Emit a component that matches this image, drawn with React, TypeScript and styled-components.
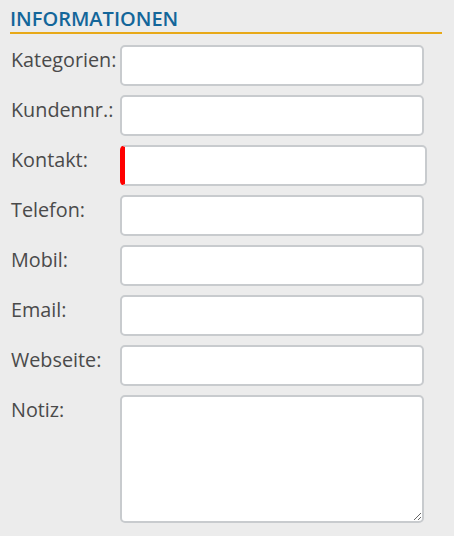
import React from 'react';
import styled, { createGlobalStyle } from 'styled-components';

const GlobalStyle = createGlobalStyle`
  html, body {
    margin: 0;
    padding: 0;
    background: #ececec;
  }
  body {
    font-family: 'Open Sans', 'Noto Sans', sans-serif;
  }
`;

const Panel = styled.section`
  padding: 7px 12px 0 10px;
`;

const Heading = styled.h2`
  margin: 0;
  font-size: 20px;
  line-height: 24px;
  font-weight: 600;
  color: #13669a;
  padding-bottom: 1px;
  border-bottom: 2px solid #e8a918;
`;

const Form = styled.div`
  margin-top: 11px;
  display: grid;
  grid-template-columns: 110px auto;
  row-gap: 9px;
  justify-items: start;
`;

const Label = styled.label`
  padding: 3px 0 0 1px;
  font-size: 19.8px;
  line-height: 24px;
  color: #4a4a4a;
  white-space: nowrap;
`;

const Input = styled.input<{ $required?: boolean }>`
  box-sizing: border-box;
  width: ${(p) => (p.$required ? 307 : 304)}px;
  height: 41px;
  margin: 0;
  padding: 4px 8px;
  background: #fff;
  border: 2px solid #c8cbce;
  border-left: ${(p) => (p.$required ? '5px solid #ff0000' : '2px solid #c8cbce')};
  border-radius: 5px;
  font-family: inherit;
  font-size: 16px;
  outline: none;
`;

const TextArea = styled.textarea`
  box-sizing: border-box;
  width: 304px;
  height: 128px;
  margin: 0;
  padding: 4px 8px;
  background: #fff;
  border: 2px solid #c8cbce;
  border-radius: 5px;
  font-family: inherit;
  font-size: 16px;
  outline: none;
  display: block;
`;

const fields: { label: string; required?: boolean }[] = [
  { label: 'Kategorien:' },
  { label: 'Kundennr.:' },
  { label: 'Kontakt:', required: true },
  { label: 'Telefon:' },
  { label: 'Mobil:' },
  { label: 'Email:' },
  { label: 'Webseite:' },
];

const App: React.FC = () => {
  return (
    <Panel>
      <GlobalStyle />
      <Heading>INFORMATIONEN</Heading>
      <Form>
        {fields.map((f) => (
          <React.Fragment key={f.label}>
            <Label>{f.label}</Label>
            <Input type='text' $required={f.required} />
          </React.Fragment>
        ))}
        <Label>Notiz:</Label>
        <TextArea />
      </Form>
    </Panel>
  );
};

export default App;
